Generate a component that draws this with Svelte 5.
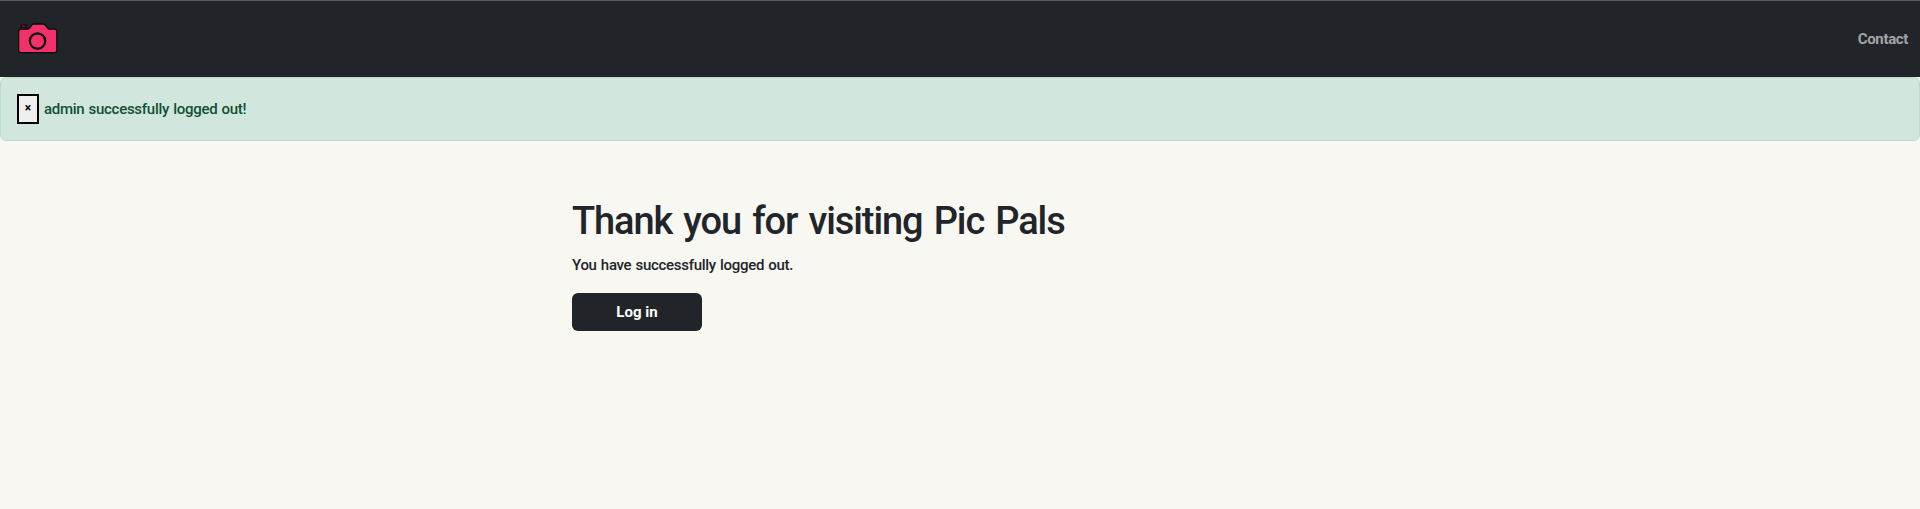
<script>
  let showAlert = $state(true);
</script>

<header>
  <a class="brand" href="#home" aria-label="Pic Pals">
    <svg width="42" height="34" viewBox="0 0 42 34" fill="#f2306a" stroke="#08090b" stroke-width="1.3" stroke-linejoin="round">
      <path d="M4.2 5.2V4.2Q4.2 3 5.4 3H8Q9.2 3 9.2 4.2V5.2Z" />
      <path d="M3.8 7.2H10.3Q11.5 7.2 12.5 6L15 2.9Q15.8 2 17 2H26Q27.2 2 28 2.9L30.5 6Q31.5 7.2 32.7 7.2H37.6Q39.8 7.2 39.8 9.4V28.5Q39.8 30.6 37.7 30.6H3.8Q1.6 30.6 1.6 28.5V9.4Q1.6 7.2 3.8 7.2Z" />
      <circle cx="20.5" cy="19" r="7.7" stroke-width="2.2" />
    </svg>
  </a>
  <nav><a href="#contact">Contact</a></nav>
</header>

{#if showAlert}
  <div class="alert" role="alert">
    <button class="close" onclick={() => (showAlert = false)}>×</button>
    <span>admin successfully logged out!</span>
  </div>
{/if}

<main>
  <h1>Thank you for visiting Pic Pals</h1>
  <p>You have successfully logged out.</p>
  <a class="login" href="#login"><span>Log in</span></a>
</main>

<style>
  :global(body) {
    margin: 0;
    background: #f8f7f2;
    color: #212529;
    font: 500 15px/24px Roboto, sans-serif;
  }
  header {
    box-sizing: border-box;
    height: 77px;
    padding: 0 12px 0 17px;
    display: flex;
    align-items: center;
    justify-content: space-between;
    background: #212529;
    border-top: 1px solid #565b60;
  }
  .brand, svg { display: block; }
  nav a {
    color: #a1a4a6;
    text-decoration: none;
    font-weight: 700;
    letter-spacing: -0.35px;
  }
  .alert {
    box-sizing: border-box;
    height: 64px;
    padding: 0 16px;
    display: flex;
    align-items: center;
    gap: 5px;
    background: #d1e7dd;
    border: 1px solid #badbcc;
    border-radius: 6px;
    color: #0f5132;
    letter-spacing: -0.27px;
    word-spacing: 0.6px;
  }
  .close {
    box-sizing: border-box;
    width: 22px;
    height: 30px;
    padding: 0 0 3px;
    border: 2px solid #000;
    background: #efefef;
    color: #000;
    font: 700 12px/20px Roboto, sans-serif;
  }
  main { padding: 56px 0 0 572px; }
  h1 {
    margin: 0 0 8px;
    font-size: 38px;
    line-height: 48px;
    font-weight: 500;
    letter-spacing: -1.1px;
    word-spacing: 2.8px;
    white-space: nowrap;
  }
  p {
    margin: 0 0 16px;
    letter-spacing: -0.3px;
    word-spacing: 0.8px;
  }
  .login {
    width: 130px;
    height: 38px;
    display: flex;
    align-items: center;
    justify-content: center;
    border-radius: 6px;
    background: #212529;
    color: #fff;
    font-weight: 700;
    text-decoration: none;
  }
</style>
